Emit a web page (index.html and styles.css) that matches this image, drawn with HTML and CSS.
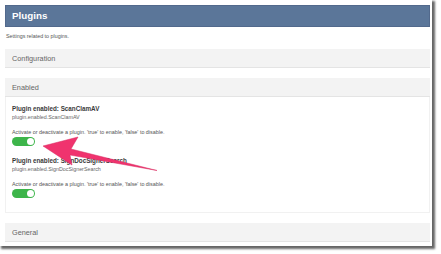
FILE: index.html
```html
<!DOCTYPE html>
<html>
<head>
<meta charset="utf-8">
<link rel="stylesheet" href="styles.css">
</head>
<body>
<div class="window">
  <div class="header">Plugins</div>
  <div class="desc">Settings related to plugins.</div>
  <div class="bar">Configuration</div>
  <div class="bar bar-gap">Enabled</div>
  <div class="panel">
    <div class="item">
      <div class="title">Plugin enabled: ScanClamAV</div>
      <div class="key">plugin.enabled.ScanClamAV</div>
      <div class="help">Activate or deactivate a plugin. 'true' to enable, 'false' to disable.</div>
      <div class="toggle"><span class="knob"></span></div>
    </div>
    <div class="item item-next">
      <div class="title">Plugin enabled: SignDocSignerSearch</div>
      <div class="key">plugin.enabled.SignDocSignerSearch</div>
      <div class="help">Activate or deactivate a plugin. 'true' to enable, 'false' to disable.</div>
      <div class="toggle"><span class="knob"></span></div>
    </div>
  </div>
  <div class="bar bar-gap">General</div>
  <svg class="arrow" width="441" height="254" viewBox="0 0 441 254">
    <polygon points="43,146 78,137 71,149 157,170.5 70,155 72,165" fill="#f0336e" stroke="#d82a60" stroke-width="0.5" stroke-linejoin="round"/>
  </svg>
</div>
</body>
</html>
```
FILE: styles.css
```css
html, body {
  margin: 0;
  padding: 0;
  background: #ffffff;
}
body {
  font-family: "Liberation Sans", Arial, sans-serif;
  width: 441px;
  height: 254px;
  overflow: hidden;
}
.window {
  position: relative;
  box-sizing: border-box;
  width: 432px;
  height: 246px;
  padding: 5px 2px 0 5px;
  background: #ffffff;
  box-shadow: 2px 2px 2px 1px rgba(0, 0, 0, 0.6);
}
.header {
  box-sizing: border-box;
  height: 22px;
  background: #5b7699;
  border: 1px solid #52698c;
  color: #ffffff;
  font-weight: bold;
  font-size: 9.8px;
  line-height: 20px;
  padding-left: 6px;
}
.desc {
  font-size: 5.35px;
  line-height: 7px;
  color: #555;
  margin: 5.5px 0 9.5px 1px;
}
.bar {
  box-sizing: border-box;
  height: 19px;
  background: #f3f3f3;
  border-bottom: 1px solid #e4e4e4;
  color: #666;
  font-size: 7.3px;
  line-height: 19px;
  padding-left: 7px;
}
.bar-gap {
  margin-top: 10px;
}
.panel {
  box-sizing: border-box;
  height: 116px;
  border: 1px solid #f1f1f1;
  border-top: none;
  padding: 8px 0 0 6px;
}
.item-next {
  margin-top: 11px;
}
.title {
  font-weight: bold;
  font-size: 6.3px;
  line-height: 8px;
  color: #3a3a3a;
}
.key {
  font-size: 5.35px;
  line-height: 7px;
  margin-top: 1px;
  color: #666;
}
.help {
  font-size: 5.4px;
  line-height: 7px;
  margin-top: 7.5px;
  color: #555;
}
.toggle {
  position: relative;
  box-sizing: border-box;
  width: 23px;
  height: 9px;
  border-radius: 4.5px;
  background: #3db54a;
  margin-top: 1.5px;
}
.knob {
  position: absolute;
  right: 1px;
  top: 1px;
  width: 7px;
  height: 7px;
  border-radius: 50%;
  background: #ffffff;
}
.arrow {
  position: absolute;
  left: 0;
  top: 0;
  pointer-events: none;
}
```
